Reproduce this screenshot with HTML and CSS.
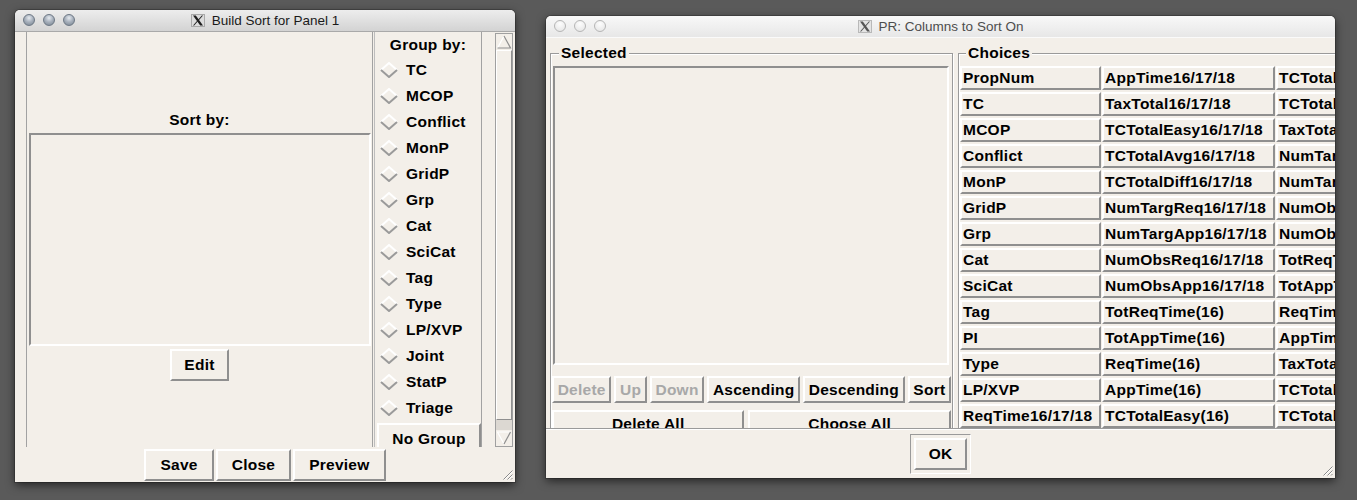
FILE: index.html
```html
<!DOCTYPE html>
<html>
<head>
<meta charset="utf-8">
<title>Sort windows</title>
<link rel="stylesheet" href="styles.css">
</head>
<body>
<div class="desktop">

  <div class="window win-left">
    <div class="titlebar active">
      <div class="lights"><span class="light"></span><span class="light"></span><span class="light"></span></div>
      <div class="title">
        <svg class="xicon" viewBox="0 0 14 13"><rect x="0.5" y="0.5" width="13" height="12" fill="#dcdcdc" stroke="#a9a9a9"/><polygon points="2,1.5 4.8,1.5 12,11.5 9.2,11.5" fill="#1e1e1e"/><polygon points="10.8,1.5 12,1.5 3.2,11.5 2,11.5" fill="#1e1e1e"/></svg>
        <span>Build Sort for Panel 1</span>
      </div>
    </div>
    <div class="lw-body">
      <div class="lw-main">
        <div class="sort-panel">
          <div class="sort-label">Sort by:</div>
          <div class="listbox sort-list"></div>
          <button class="tkbtn edit-btn">Edit</button>
        </div>
        <div class="group-panel">
          <div class="group-label">Group by:</div>
          <div class="radio"><svg class="diamond" viewBox="0 0 18 16"><polyline points="1,8 9,1 17,8" fill="none" stroke="#fff" stroke-width="2"/><polyline points="1,8 9,15 17,8" fill="none" stroke="#9a9a9a" stroke-width="2"/></svg><span>TC</span></div>
          <div class="radio"><svg class="diamond" viewBox="0 0 18 16"><polyline points="1,8 9,1 17,8" fill="none" stroke="#fff" stroke-width="2"/><polyline points="1,8 9,15 17,8" fill="none" stroke="#9a9a9a" stroke-width="2"/></svg><span>MCOP</span></div>
          <div class="radio"><svg class="diamond" viewBox="0 0 18 16"><polyline points="1,8 9,1 17,8" fill="none" stroke="#fff" stroke-width="2"/><polyline points="1,8 9,15 17,8" fill="none" stroke="#9a9a9a" stroke-width="2"/></svg><span>Conflict</span></div>
          <div class="radio"><svg class="diamond" viewBox="0 0 18 16"><polyline points="1,8 9,1 17,8" fill="none" stroke="#fff" stroke-width="2"/><polyline points="1,8 9,15 17,8" fill="none" stroke="#9a9a9a" stroke-width="2"/></svg><span>MonP</span></div>
          <div class="radio"><svg class="diamond" viewBox="0 0 18 16"><polyline points="1,8 9,1 17,8" fill="none" stroke="#fff" stroke-width="2"/><polyline points="1,8 9,15 17,8" fill="none" stroke="#9a9a9a" stroke-width="2"/></svg><span>GridP</span></div>
          <div class="radio"><svg class="diamond" viewBox="0 0 18 16"><polyline points="1,8 9,1 17,8" fill="none" stroke="#fff" stroke-width="2"/><polyline points="1,8 9,15 17,8" fill="none" stroke="#9a9a9a" stroke-width="2"/></svg><span>Grp</span></div>
          <div class="radio"><svg class="diamond" viewBox="0 0 18 16"><polyline points="1,8 9,1 17,8" fill="none" stroke="#fff" stroke-width="2"/><polyline points="1,8 9,15 17,8" fill="none" stroke="#9a9a9a" stroke-width="2"/></svg><span>Cat</span></div>
          <div class="radio"><svg class="diamond" viewBox="0 0 18 16"><polyline points="1,8 9,1 17,8" fill="none" stroke="#fff" stroke-width="2"/><polyline points="1,8 9,15 17,8" fill="none" stroke="#9a9a9a" stroke-width="2"/></svg><span>SciCat</span></div>
          <div class="radio"><svg class="diamond" viewBox="0 0 18 16"><polyline points="1,8 9,1 17,8" fill="none" stroke="#fff" stroke-width="2"/><polyline points="1,8 9,15 17,8" fill="none" stroke="#9a9a9a" stroke-width="2"/></svg><span>Tag</span></div>
          <div class="radio"><svg class="diamond" viewBox="0 0 18 16"><polyline points="1,8 9,1 17,8" fill="none" stroke="#fff" stroke-width="2"/><polyline points="1,8 9,15 17,8" fill="none" stroke="#9a9a9a" stroke-width="2"/></svg><span>Type</span></div>
          <div class="radio"><svg class="diamond" viewBox="0 0 18 16"><polyline points="1,8 9,1 17,8" fill="none" stroke="#fff" stroke-width="2"/><polyline points="1,8 9,15 17,8" fill="none" stroke="#9a9a9a" stroke-width="2"/></svg><span>LP/XVP</span></div>
          <div class="radio"><svg class="diamond" viewBox="0 0 18 16"><polyline points="1,8 9,1 17,8" fill="none" stroke="#fff" stroke-width="2"/><polyline points="1,8 9,15 17,8" fill="none" stroke="#9a9a9a" stroke-width="2"/></svg><span>Joint</span></div>
          <div class="radio"><svg class="diamond" viewBox="0 0 18 16"><polyline points="1,8 9,1 17,8" fill="none" stroke="#fff" stroke-width="2"/><polyline points="1,8 9,15 17,8" fill="none" stroke="#9a9a9a" stroke-width="2"/></svg><span>StatP</span></div>
          <div class="radio"><svg class="diamond" viewBox="0 0 18 16"><polyline points="1,8 9,1 17,8" fill="none" stroke="#fff" stroke-width="2"/><polyline points="1,8 9,15 17,8" fill="none" stroke="#9a9a9a" stroke-width="2"/></svg><span>Triage</span></div>
          <button class="tkbtn nogroup">No Group</button>
        </div>
        <div class="scrollbar">
          <svg class="sb-arrow" viewBox="0 0 16 16"><polygon points="8,2 14.5,14 1.5,14" fill="#f3efe9"/><polyline points="1.5,14 8,2" fill="none" stroke="#fff" stroke-width="1.2"/><polyline points="8,2 14.5,14 1.5,14" fill="none" stroke="#8f8f8f" stroke-width="1.2"/></svg>
          <div class="sb-slider"></div>
          <div class="sb-trough"></div>
          <svg class="sb-arrow" viewBox="0 0 16 16"><polygon points="1.5,2 14.5,2 8,14" fill="#f3efe9"/><polyline points="8,14 1.5,2 14.5,2" fill="none" stroke="#fff" stroke-width="1.2"/><polyline points="14.5,2 8,14" fill="none" stroke="#8f8f8f" stroke-width="1.2"/></svg>
        </div>
      </div>
      <div class="lw-buttons">
        <button class="tkbtn big">Save</button>
        <button class="tkbtn big">Close</button>
        <button class="tkbtn big">Preview</button>
      </div>
    </div>
    <svg class="grip" viewBox="0 0 12 12"><path d="M11.5 2.5L2.5 11.5M11.5 6.5L6.5 11.5M11.5 10L10 11.5" stroke="#8a8a8a" fill="none"/><path d="M11.5 3.5L3.5 11.5M11.5 7.5L7.5 11.5" stroke="#fff" fill="none"/></svg>
  </div>

  <div class="window win-right">
    <div class="titlebar inactive">
      <div class="lights"><span class="light"></span><span class="light"></span><span class="light"></span></div>
      <div class="title">
        <svg class="xicon" viewBox="0 0 14 13"><rect x="0.5" y="0.5" width="13" height="12" fill="#e4e4e4" stroke="#b9b9b9"/><polygon points="2,1.5 4.8,1.5 12,11.5 9.2,11.5" fill="#555"/><polygon points="10.8,1.5 12,1.5 3.2,11.5 2,11.5" fill="#555"/></svg>
        <span>PR: Columns to Sort On</span>
      </div>
    </div>
    <div class="rw-body">
      <div class="rw-top">
        <fieldset class="lframe sel-frame">
          <legend>Selected</legend>
          <div class="listbox sel-list"></div>
          <div class="btn-row">
            <button class="tkbtn disabled">Delete</button>
            <button class="tkbtn disabled">Up</button>
            <button class="tkbtn disabled">Down</button>
            <button class="tkbtn">Ascending</button>
            <button class="tkbtn">Descending</button>
            <button class="tkbtn">Sort</button>
          </div>
          <div class="btn-row btn-row2">
            <button class="tkbtn">Delete All</button>
            <button class="tkbtn">Choose All</button>
          </div>
        </fieldset>
        <fieldset class="lframe choice-frame">
          <legend>Choices</legend>
          <div class="choices">
            <div class="cell">PropNum</div><div class="cell">AppTime16/17/18</div><div class="cell">TCTotalAvg(16)</div>
            <div class="cell">TC</div><div class="cell">TaxTotal16/17/18</div><div class="cell">TCTotalDiff(16)</div>
            <div class="cell">MCOP</div><div class="cell">TCTotalEasy16/17/18</div><div class="cell">TaxTotal(16)</div>
            <div class="cell">Conflict</div><div class="cell">TCTotalAvg16/17/18</div><div class="cell">NumTargReq(16)</div>
            <div class="cell">MonP</div><div class="cell">TCTotalDiff16/17/18</div><div class="cell">NumTargApp(16)</div>
            <div class="cell">GridP</div><div class="cell">NumTargReq16/17/18</div><div class="cell">NumObsReq(16)</div>
            <div class="cell">Grp</div><div class="cell">NumTargApp16/17/18</div><div class="cell">NumObsApp(16)</div>
            <div class="cell">Cat</div><div class="cell">NumObsReq16/17/18</div><div class="cell">TotReqTime(17)</div>
            <div class="cell">SciCat</div><div class="cell">NumObsApp16/17/18</div><div class="cell">TotAppTime(17)</div>
            <div class="cell">Tag</div><div class="cell">TotReqTime(16)</div><div class="cell">ReqTime(17)</div>
            <div class="cell">PI</div><div class="cell">TotAppTime(16)</div><div class="cell">AppTime(17)</div>
            <div class="cell">Type</div><div class="cell">ReqTime(16)</div><div class="cell">TaxTotal(17)</div>
            <div class="cell">LP/XVP</div><div class="cell">AppTime(16)</div><div class="cell">TCTotalEasy(17)</div>
            <div class="cell">ReqTime16/17/18</div><div class="cell">TCTotalEasy(16)</div><div class="cell">TCTotalAvg(17)</div>
          </div>
        </fieldset>
      </div>
      <div class="rw-bottom">
        <div class="ok-ring"><button class="tkbtn">OK</button></div>
      </div>
    </div>
    <svg class="grip" viewBox="0 0 12 12"><path d="M11.5 2.5L2.5 11.5M11.5 6.5L6.5 11.5M11.5 10L10 11.5" stroke="#8a8a8a" fill="none"/><path d="M11.5 3.5L3.5 11.5M11.5 7.5L7.5 11.5" stroke="#fff" fill="none"/></svg>
  </div>

</div>
</body>
</html>
```

FILE: styles.css
```css
* { box-sizing: border-box; }

body {
  margin: 0;
  font-family: "Liberation Sans", Arial, sans-serif;
}

.desktop {
  position: relative;
  width: 1357px;
  height: 500px;
  background: #5a5a5a;
  overflow: hidden;
}

.window {
  position: absolute;
  display: flex;
  flex-direction: column;
  background: #f3efe9;
  border-radius: 5px 5px 0 0;
  box-shadow: 0 3px 10px rgba(0, 0, 0, 0.6), 0 0 0 1px rgba(0, 0, 0, 0.2);
  overflow: hidden;
}

.win-left { left: 15px; top: 10px; width: 500px; height: 472px; }
.win-right { left: 546px; top: 16px; width: 789px; height: 462px; }

/* title bars */
.titlebar {
  position: relative;
  flex: 0 0 22px;
  display: flex;
  align-items: center;
  justify-content: center;
  border-bottom: 1px solid #a9a9a9;
  font-size: 13.5px;
}
.titlebar.active { background: linear-gradient(#ededed, #d3d3d3); color: #1a1a1a; }
.titlebar.inactive { background: linear-gradient(#f8f8f8, #e7e7e7); color: #4d4d4d; border-bottom-color: #fafafa; }

.lights { position: absolute; left: 8px; top: 4px; display: flex; gap: 8px; }
.light { width: 12px; height: 12px; border-radius: 50%; }
.active .light {
  background: radial-gradient(circle at 50% 30%, #e6ebf0 0, #aab3bf 45%, #77838f 100%);
  border: 1px solid #6d7885;
}
.inactive .light {
  background: radial-gradient(circle at 50% 30%, #fdfdfd, #e3e3e3);
  border: 1px solid #b5b5b5;
}
.title { display: flex; align-items: center; gap: 7px; }
.xicon { width: 14px; height: 13px; display: block; }

/* generic Tk widgets */
.tkbtn {
  font: inherit;
  letter-spacing: inherit;
  color: #000;
  background: #f3efe9;
  border: 2px solid;
  border-color: #fff #8f8f8f #8f8f8f #fff;
  margin: 0;
  padding: 0 12px;
  height: 32px;
  line-height: 28px;
  white-space: nowrap;
}
.tkbtn.disabled { color: #a8a8a8; }

.listbox {
  border: 2px solid;
  border-color: #8f8f8f #fff #fff #8f8f8f;
  background: #f3efe9;
}

/* left window */
.lw-body {
  flex: 1;
  display: flex;
  flex-direction: column;
  font-weight: bold;
  font-size: 15.5px;
  letter-spacing: 0.25px;
  color: #000;
}
.lw-main { display: flex; height: 415px; margin-left: 11px; }

.sort-panel {
  width: 347px;
  flex: none;
  display: flex;
  flex-direction: column;
  border-left: 1px solid #a2a2a2;
  border-right: 1px solid #a2a2a2;
}
.sort-label { margin-top: 79px; line-height: 18px; text-align: center; }
.sort-list { height: 213px; margin: 4px 1px 0 2px; }
.edit-btn { align-self: center; margin-top: 3px; }

.group-panel {
  width: 108px;
  flex: none;
  margin-left: 1px;
  border-left: 1px solid #bdbdbd;
  border-right: 1px solid #a2a2a2;
  overflow: hidden;
  display: flex;
  flex-direction: column;
}
.group-label { margin: 4px 0 3px; line-height: 18px; text-align: center; }
.radio { height: 26px; flex: none; display: flex; align-items: center; gap: 8px; padding-left: 5px; }
.diamond { width: 18px; height: 16px; flex: none; display: block; }
.nogroup { margin: 2px 0 0 2px; height: 30px; flex: none; }

.scrollbar {
  width: 18px;
  height: 414px;
  margin: 1px 0 0 13px;
  flex: none;
  border: 1px solid #a0a0a0;
  background: #dcd8d2;
  display: flex;
  flex-direction: column;
}
.sb-arrow { width: 16px; height: 16px; flex: none; display: block; background: #f3efe9; }
.sb-slider {
  height: 370px;
  flex: none;
  border: 1px solid;
  border-color: #fff #8f8f8f #8f8f8f #fff;
  background: #f3efe9;
}
.sb-trough { flex: 1; }

.lw-buttons { display: flex; justify-content: center; gap: 2px; margin-top: 2px; }
.tkbtn.big { padding: 0 14px; }

.grip { position: absolute; right: 2px; bottom: 2px; width: 12px; height: 12px; }

/* right window */
.rw-body {
  flex: 1;
  display: flex;
  flex-direction: column;
  font-weight: bold;
  font-size: 15.5px;
  letter-spacing: 0.25px;
  color: #000;
}
.rw-top {
  height: 390px;
  flex: none;
  display: flex;
  align-items: flex-start;
  overflow: hidden;
}
.lframe {
  margin: 6px 0 0;
  padding: 0;
  border: 1px solid #9a9a9a;
  box-shadow: inset 1px 1px 0 #fff, 1px 1px 0 #fff;
  min-width: 0;
  flex: none;
}
.lframe legend { padding: 0 2px; line-height: 18px; background: #f3efe9; }
.sel-frame { margin-left: 4px; width: 403px; height: 420px; }
.sel-frame legend { margin-left: 8px; }
.sel-list { height: 299px; margin: 4px 3px 0 2px; }

.btn-row { display: flex; gap: 3px; margin: 11px 1px 0; }
.btn-row .tkbtn { height: 27px; line-height: 23px; padding: 0 3px; flex: 1 1 auto; }
.btn-row2 { margin-top: 7px; gap: 4px; }

.choice-frame { margin-left: 5px; width: 520px; height: 420px; }
.choice-frame legend { margin-left: 7px; }
.choices {
  display: grid;
  grid-template-columns: 141px 173px 180px;
  grid-auto-rows: 24px;
  column-gap: 1px;
  row-gap: 2px;
  margin: 4px 0 0 1px;
}
.cell {
  border: 2px solid;
  border-color: #fff #8f8f8f #8f8f8f #fff;
  padding-left: 1px;
  line-height: 20px;
  white-space: nowrap;
  overflow: hidden;
}

.rw-bottom {
  flex: 1;
  border-top: 1px solid #9a9a9a;
  box-shadow: inset 0 1px 0 #fff;
  display: flex;
  justify-content: center;
  align-items: flex-start;
  padding-top: 5px;
}
.ok-ring {
  border: 1px solid;
  border-color: #9a9a9a #fff #fff #9a9a9a;
  padding: 3px;
}
.ok-ring .tkbtn { padding: 0 13px; }
```
